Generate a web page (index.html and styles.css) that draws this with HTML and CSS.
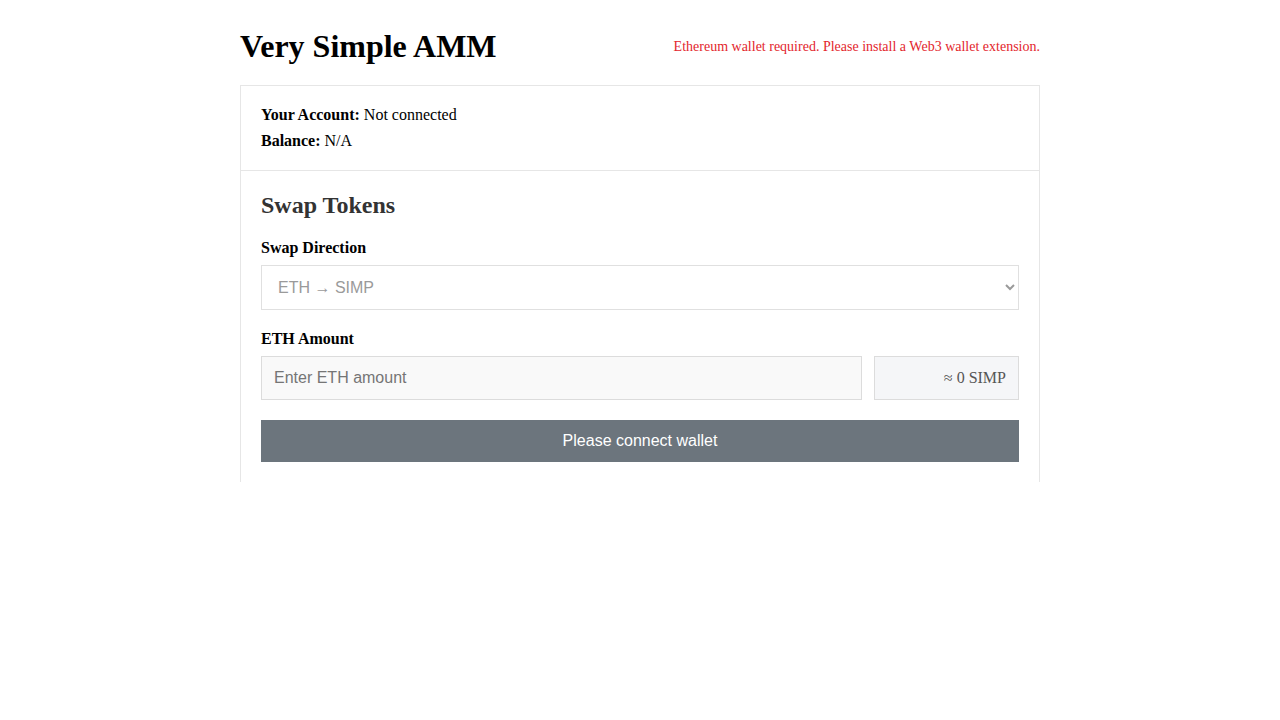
FILE: index.html
```html
<!DOCTYPE html>
<html lang="en">
<head>
<meta charset="utf-8">
<title>Very Simple AMM</title>
<link rel="stylesheet" href="styles.css">
</head>
<body>
<div class="container">
  <header class="header">
    <h1 class="title">Very Simple AMM</h1>
    <div class="error">Ethereum wallet required. Please install a Web3 wallet extension.</div>
  </header>
  <div class="card">
    <section class="account">
      <div class="line"><strong>Your Account:</strong> Not connected</div>
      <div class="line"><strong>Balance:</strong> N/A</div>
    </section>
    <section class="swap">
      <h2 class="swap-title">Swap Tokens</h2>
      <label class="label">Swap Direction</label>
      <select class="select">
        <option>ETH → SIMP</option>
        <option>SIMP → ETH</option>
      </select>
      <label class="label label-amount">ETH Amount</label>
      <div class="amount-row">
        <input class="amount-input" type="text" placeholder="Enter ETH amount">
        <div class="estimate">≈ 0 SIMP</div>
      </div>
      <button class="btn">Please connect wallet</button>
    </section>
  </div>
</div>
</body>
</html>
```
FILE: styles.css
```css
* { box-sizing: border-box; }
body {
  margin: 0;
  font-family: "Liberation Serif", "Times New Roman", serif;
  color: #000;
  background: #fff;
}
.container {
  width: 800px;
  margin: 0 auto;
  padding-top: 28px;
}
.header {
  display: flex;
  align-items: center;
  justify-content: space-between;
  margin-bottom: 21px;
}
.title {
  margin: 0;
  font-size: 32px;
  line-height: 36px;
  font-weight: bold;
}
.error {
  color: #e3262d;
  font-size: 14px;
  line-height: 18px;
  padding-top: 2px;
}
.card {
  border: 1px solid #e6e6e6;
  border-bottom: none;
}
.account {
  padding: 16px 20px 16px;
  border-bottom: 1px solid #e6e6e6;
}
.line {
  font-size: 16px;
  line-height: 26px;
}
.swap {
  padding: 20px 20px 20px;
  display: flex;
  flex-direction: column;
}
.swap-title {
  margin: 0 0 19px;
  font-size: 24px;
  line-height: 28px;
  font-weight: bold;
  color: #333;
}
.label {
  font-weight: bold;
  font-size: 16px;
  line-height: 20px;
  margin-bottom: 7px;
}
.label-amount { margin-top: 19px; }
.select {
  height: 45px;
  width: 100%;
  padding: 0 12px;
  border: 1px solid #e0e0e0;
  border-radius: 0;
  background: #fff;
  color: #9a9a9a;
  font-family: "Liberation Sans", Arial, sans-serif;
  font-size: 16px;
}
.amount-row {
  display: flex;
  gap: 12px;
  height: 44px;
}
.amount-input {
  flex: 1;
  height: 44px;
  padding: 0 12px;
  border: 1px solid #dcdcdc;
  border-radius: 0;
  background: #f9f9f9;
  font-family: "Liberation Sans", Arial, sans-serif;
  font-size: 16px;
  color: #333;
}
.amount-input::placeholder { color: #757575; }
.estimate {
  width: 145px;
  height: 44px;
  display: flex;
  align-items: center;
  justify-content: flex-end;
  padding: 0 12px;
  border: 1px solid #dcdcdc;
  background: #f5f6f8;
  color: #555;
  font-size: 16px;
}
.btn {
  margin-top: 20px;
  height: 42px;
  width: 100%;
  border: none;
  border-radius: 0;
  background: #6c757d;
  color: #fff;
  font-family: "Liberation Sans", Arial, sans-serif;
  font-size: 16px;
}
```
